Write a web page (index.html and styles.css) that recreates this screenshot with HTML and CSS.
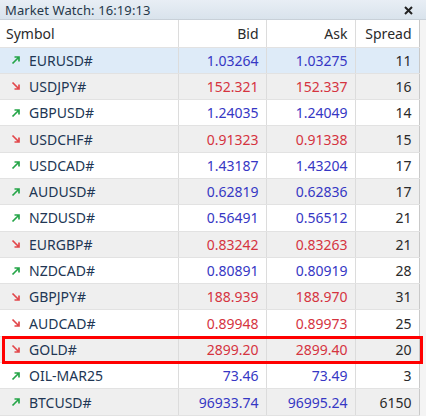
FILE: index.html
```html
<!DOCTYPE html>
<html>

<head>
  <title>Market Watch</title>
  <link rel="stylesheet" href="styles.css">
</head>

<body>
  <div class="window">
    <div class="title-bar">
      <span class="title">Market Watch: 16:19:13</span>
      <svg class="close" width="9" height="9" viewBox="0 0 9 9">
        <path d="M1 1 L8 8 M8 1 L1 8" stroke="#222" stroke-width="2"/>
      </svg>
    </div>

    <table class="quotes">
      <colgroup>
        <col class="col-symbol">
        <col class="col-bid">
        <col class="col-ask">
        <col class="col-spread">
      </colgroup>
      <thead>
        <tr>
          <th class="symbol">Symbol</th>
          <th>Bid</th>
          <th>Ask</th>
          <th>Spread</th>
        </tr>
      </thead>
      <tbody id="rows"></tbody>
    </table>
  </div>

  <script>
    const quotes = [
      ["EURUSD#", "1.03264", "1.03275", 11, "up"],
      ["USDJPY#", "152.321", "152.337", 16, "down"],
      ["GBPUSD#", "1.24035", "1.24049", 14, "up"],
      ["USDCHF#", "0.91323", "0.91338", 15, "down"],
      ["USDCAD#", "1.43187", "1.43204", 17, "up"],
      ["AUDUSD#", "0.62819", "0.62836", 17, "up"],
      ["NZDUSD#", "0.56491", "0.56512", 21, "up"],
      ["EURGBP#", "0.83242", "0.83263", 21, "down"],
      ["NZDCAD#", "0.80891", "0.80919", 28, "up"],
      ["GBPJPY#", "188.939", "188.970", 31, "down"],
      ["AUDCAD#", "0.89948", "0.89973", 25, "down"],
      ["GOLD#", "2899.20", "2899.40", 20, "down"],
      ["OIL-MAR25", "73.46", "73.49", 3, "up"],
      ["BTCUSD#", "96933.74", "96995.24", 6150, "up"]
    ];

    const arrows = {
      up: '<svg class="arrow" width="10" height="10" viewBox="0 0 10 10"><path d="M1.5 8.5 L8 2 M3.5 2 H8 V6.5" fill="none" stroke="#25a548" stroke-width="1.7"/></svg>',
      down: '<svg class="arrow" width="10" height="10" viewBox="0 0 10 10"><path d="M1.5 1.5 L8 8 M3.5 8 H8 V3.5" fill="none" stroke="#e2474b" stroke-width="1.7"/></svg>'
    };

    const tbody = document.getElementById("rows");
    quotes.forEach((q, i) => {
      const tr = document.createElement("tr");
      if (i === 0) tr.className = "selected";
      if (q[0] === "GOLD#") tr.className = "marked";
      tr.innerHTML = `
        <td class="symbol"><span class="cell">${arrows[q[4]]}<span>${q[0]}</span></span></td>
        <td class="price ${q[4]}">${q[1]}</td>
        <td class="price ${q[4]}">${q[2]}</td>
        <td class="spread">${q[3]}</td>`;
      tbody.appendChild(tr);
    });
  </script>
</body>

</html>
```

FILE: styles.css
```css
body {
  margin: 0;
  background-color: #f4f4f4;
  font-family: "Noto Sans", "Open Sans", sans-serif;
  overflow: hidden;
}

.window {
  width: 426px;
  height: 416px;
  overflow: hidden;
}

.title-bar {
  height: 20px;
  display: flex;
  align-items: center;
  justify-content: space-between;
  padding: 0 13px 0 5px;
  background: linear-gradient(#e8eef5, #d9e3ec);
  border-bottom: 1px solid #c8d0d8;
  box-sizing: border-box;
}

.title {
  font-size: 13px;
  color: #26384a;
  letter-spacing: 0.1px;
}

.close {
  display: block;
  margin-top: 1px;
}

.quotes {
  width: 419px;
  border-collapse: collapse;
  table-layout: fixed;
  background-color: #fff;
  font-size: 14px;
}

.col-symbol {
  width: 178px;
}

.col-bid {
  width: 88px;
}

.col-ask {
  width: 89px;
}

.col-spread {
  width: 64px;
}

.quotes th,
.quotes td {
  height: 26.3px;
  padding: 0 7px 0 6px;
  text-align: right;
  border-left: 1px solid #dcdcdc;
  border-bottom: 1px solid #e2e2e2;
  box-sizing: border-box;
  white-space: nowrap;
}

.quotes th {
  height: 27px;
  font-weight: normal;
  color: #2a2a2a;
  background-color: #fff;
}

.quotes th:last-child,
.quotes td:last-child {
  border-right: 1px solid #c9c9c9;
}

.quotes .symbol {
  text-align: left;
  border-left: none;
}

.quotes td.symbol {
  padding-left: 11px;
  color: #213654;
}

.cell {
  display: flex;
  align-items: center;
  gap: 8px;
}

.arrow {
  display: block;
}

.price.up {
  color: #3637c4;
}

.price.down {
  color: #d5343f;
}

.spread {
  color: #2a2a2a;
}

tbody tr:nth-child(even) {
  background-color: #efefef;
}

tbody tr.selected {
  background-color: #deebf8;
}

/* red highlight box drawn over the gold row */
tbody tr.marked td.symbol {
  position: relative;
}

tbody tr.marked td.symbol::after {
  content: "";
  position: absolute;
  left: 2px;
  top: -1px;
  width: 415px;
  height: 22px;
  border: 3px solid #f00;
  pointer-events: none;
}
```
